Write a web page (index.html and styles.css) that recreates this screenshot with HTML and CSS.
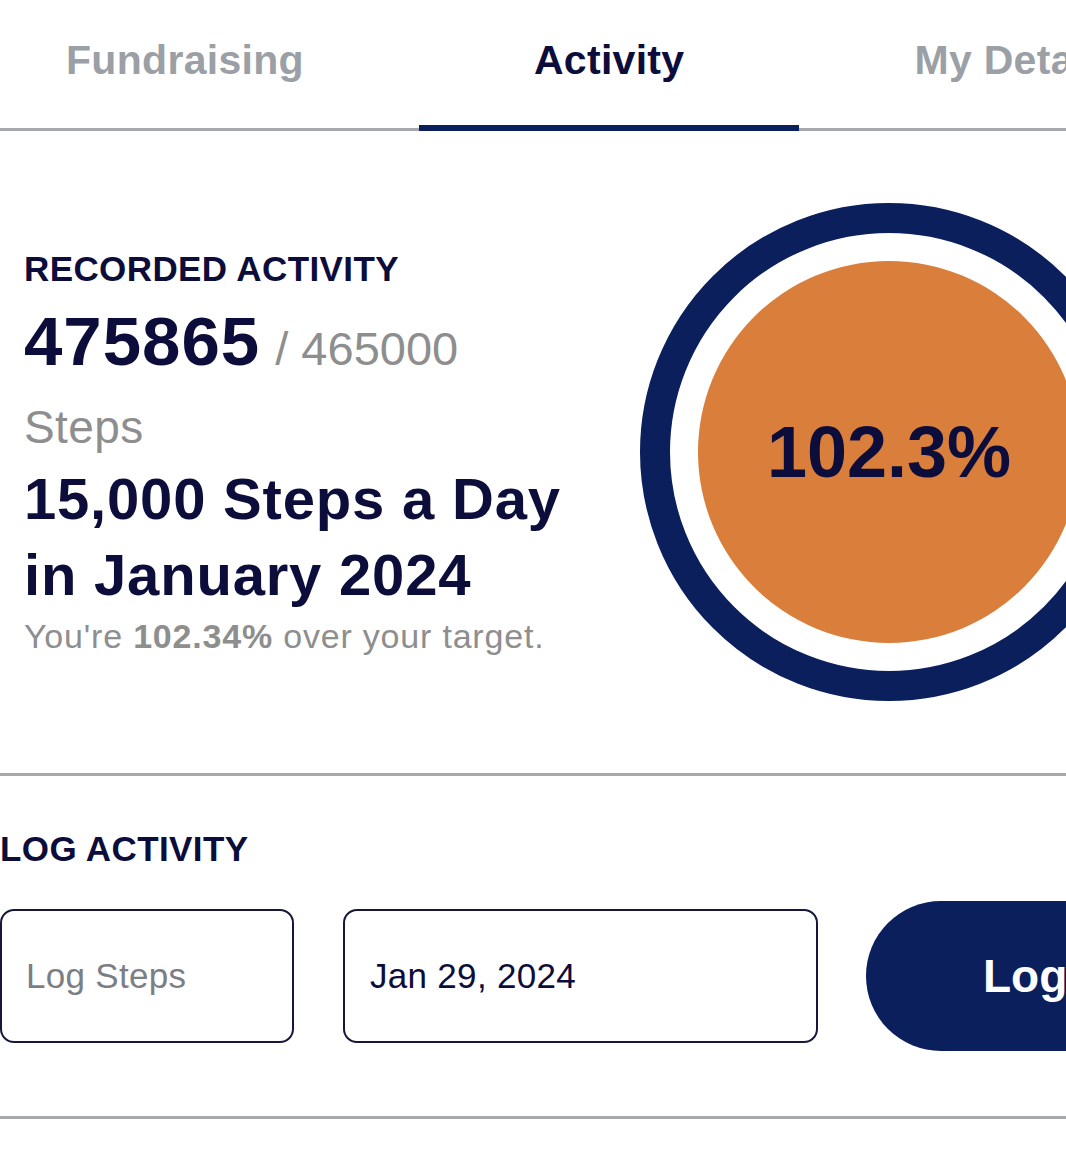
FILE: index.html
```html
<!DOCTYPE html>
<html lang="en">
<head>
<meta charset="utf-8">
<title>Activity</title>
<link rel="stylesheet" href="styles.css">
</head>
<body>
<nav class="tabs">
  <div class="tab">Fundraising</div>
  <div class="tab active">Activity</div>
  <div class="tab">My Details</div>
</nav>

<section class="recorded">
  <div class="summary">
    <h2 class="label">RECORDED ACTIVITY</h2>
    <div class="count"><span class="current">475865</span><span class="target">/ 465000</span></div>
    <div class="unit">Steps</div>
    <h1 class="title">15,000 Steps a Day in January 2024</h1>
    <p class="note">You're <strong>102.34%</strong> over your target.</p>
  </div>
  <div class="ring">
    <div class="disc">102.3%</div>
  </div>
</section>

<section class="log">
  <h2 class="label">LOG ACTIVITY</h2>
  <div class="form-row">
    <div class="field steps-field"><span class="placeholder">Log Steps</span></div>
    <div class="field date-field"><span class="value">Jan 29, 2024</span></div>
    <button class="log-btn">Log</button>
  </div>
</section>
</body>
</html>
```

FILE: styles.css
```css
html, body {
  margin: 0;
  padding: 0;
  overflow: hidden;
  background: #ffffff;
}
body {
  width: 1066px;
  font-family: "Liberation Sans", Arial, Helvetica, sans-serif;
  color: #0c0d3a;
}

/* Tabs */
.tabs {
  display: flex;
  margin-left: -49px;
  width: 1300px;
  border-bottom: 3px solid #a6a8ab;
  height: 128px;
}
.tab {
  flex: 0 0 auto;
  box-sizing: border-box;
  height: 131px;
  padding: 40px 115px 0;
  font-size: 41px;
  line-height: 41px;
  font-weight: 700;
  letter-spacing: 0.3px;
  color: #9b9fa6;
  white-space: nowrap;
}
.tab.active {
  color: #0c0d3a;
  border-bottom: 6px solid #0a1f5c;
}

/* Recorded section */
.recorded {
  display: flex;
  align-items: center;
  padding: 72px 0 72px 24px;
  border-bottom: 3px solid #a6a8ab;
}
.summary {
  flex: 0 0 616px;
}
.label {
  margin: 0;
  font-size: 35px;
  line-height: 40px;
  font-weight: 700;
  letter-spacing: 0.4px;
  color: #0c0d3a;
}
.count {
  margin-top: 13px;
  font-size: 69px;
  line-height: 80px;
  white-space: nowrap;
}
.current {
  font-weight: 700;
  letter-spacing: 1px;
  color: #0c0d3a;
}
.target {
  margin-left: 15px;
  font-size: 47px;
  line-height: 1;
  color: #8e8e8e;
}
.unit {
  margin-top: 19px;
  font-size: 46px;
  line-height: 52px;
  letter-spacing: 0.4px;
  color: #8e8e8e;
}
.title {
  margin: 8px 0 0;
  max-width: 580px;
  font-size: 58px;
  line-height: 76px;
  font-weight: 700;
  letter-spacing: 0.8px;
  color: #0c0d3a;
}
.note {
  margin: 3px 0 0;
  font-size: 34px;
  line-height: 40px;
  letter-spacing: 0.8px;
  color: #8e8e8e;
}
.note strong {
  font-weight: 700;
}

.ring {
  flex: 0 0 498px;
  width: 498px;
  height: 498px;
  box-sizing: border-box;
  border: 30px solid #0a1f5c;
  border-radius: 50%;
  padding: 28px;
}
.disc {
  width: 382px;
  height: 382px;
  border-radius: 50%;
  background: #d97e3b;
  display: flex;
  align-items: center;
  justify-content: center;
  font-size: 72px;
  line-height: 72px;
  font-weight: 700;
  color: #0c0d3a;
}

/* Log section */
.log {
  padding: 53px 0 65px 0;
  border-bottom: 3px solid #a6a8ab;
}
.form-row {
  display: flex;
  align-items: center;
  margin-top: 32px;
  width: 1300px;
}
.field {
  flex: 0 0 auto;
  box-sizing: border-box;
  height: 134px;
  border: 2.5px solid #15183a;
  border-radius: 14px;
  display: flex;
  align-items: center;
  font-size: 35px;
  letter-spacing: 0.3px;
}
.steps-field {
  width: 294px;
  padding-left: 24px;
}
.date-field {
  width: 475px;
  margin-left: 49px;
  padding-left: 25px;
}
.placeholder {
  color: #7c7e86;
}
.value {
  color: #0c0d3a;
}
.log-btn {
  flex: 0 0 auto;
  margin-left: 48px;
  height: 150px;
  padding: 0 117px;
  border: none;
  border-radius: 75px;
  background: #0a1f5c;
  color: #ffffff;
  font-family: "Liberation Sans", Arial, Helvetica, sans-serif;
  font-size: 46px;
  font-weight: 700;
}
```
